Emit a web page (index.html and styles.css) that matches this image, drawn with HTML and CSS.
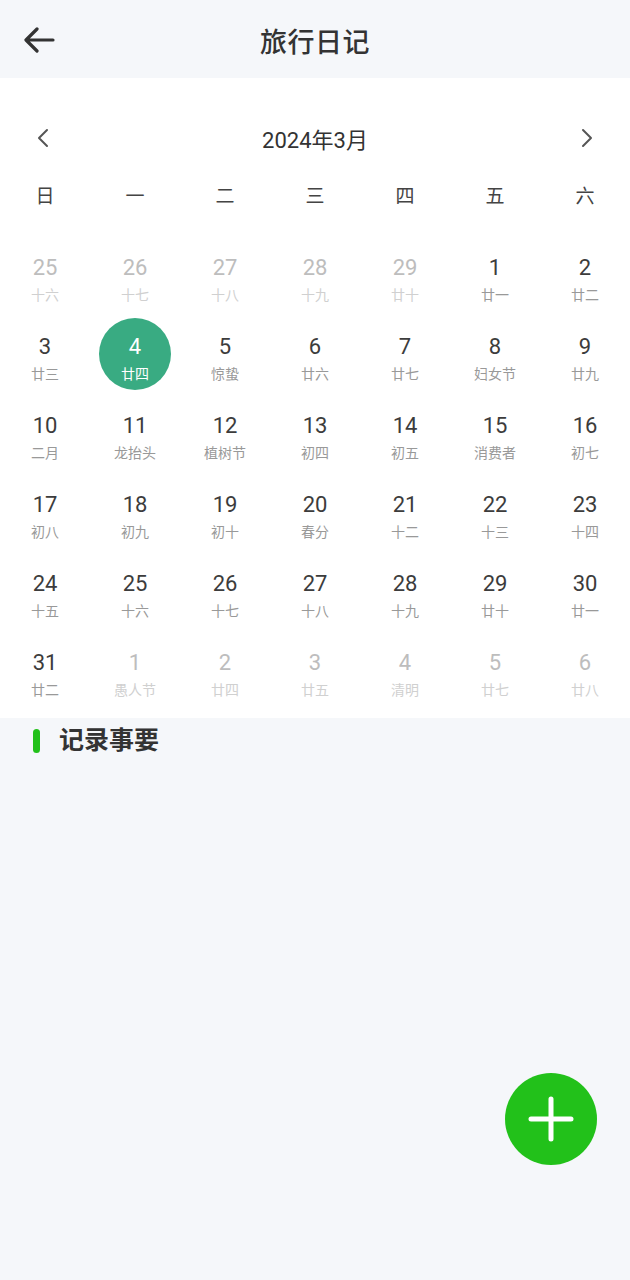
FILE: index.html
```html
<!DOCTYPE html>
<html lang="zh">
<head>
<meta charset="utf-8">
<link rel="stylesheet" href="styles.css">
</head>
<body>
<div class="page">
  <header class="topbar">
    <span class="back">
      <svg width="32" height="26" viewBox="0 0 32 26"><path d="M30 13H4M14 2L3 13l11 11" fill="none" stroke="#333" stroke-width="3.2" stroke-linecap="round" stroke-linejoin="round"/></svg>
    </span>
    <h1 class="title">旅行日记</h1>
  </header>

  <section class="calendar">
    <div class="month-bar">
      <span class="chev"><svg width="14" height="20" viewBox="0 0 14 20"><path d="M11 2L3 10l8 8" fill="none" stroke="#555" stroke-width="2" stroke-linecap="round" stroke-linejoin="round"/></svg></span>
      <span class="month">2024年3月</span>
      <span class="chev"><svg width="14" height="20" viewBox="0 0 14 20"><path d="M3 2l8 8-8 8" fill="none" stroke="#555" stroke-width="2" stroke-linecap="round" stroke-linejoin="round"/></svg></span>
    </div>
    <div class="weekdays">
      <span>日</span><span>一</span><span>二</span><span>三</span><span>四</span><span>五</span><span>六</span>
    </div>
    <div class="days">
      <div class="day other"><span class="num">25</span><span class="lunar">十六</span></div>
      <div class="day other"><span class="num">26</span><span class="lunar">十七</span></div>
      <div class="day other"><span class="num">27</span><span class="lunar">十八</span></div>
      <div class="day other"><span class="num">28</span><span class="lunar">十九</span></div>
      <div class="day other"><span class="num">29</span><span class="lunar">廿十</span></div>
      <div class="day"><span class="num">1</span><span class="lunar">廿一</span></div>
      <div class="day"><span class="num">2</span><span class="lunar">廿二</span></div>

      <div class="day"><span class="num">3</span><span class="lunar">廿三</span></div>
      <div class="day selected"><span class="num">4</span><span class="lunar">廿四</span></div>
      <div class="day"><span class="num">5</span><span class="lunar">惊蛰</span></div>
      <div class="day"><span class="num">6</span><span class="lunar">廿六</span></div>
      <div class="day"><span class="num">7</span><span class="lunar">廿七</span></div>
      <div class="day"><span class="num">8</span><span class="lunar">妇女节</span></div>
      <div class="day"><span class="num">9</span><span class="lunar">廿九</span></div>

      <div class="day"><span class="num">10</span><span class="lunar">二月</span></div>
      <div class="day"><span class="num">11</span><span class="lunar">龙抬头</span></div>
      <div class="day"><span class="num">12</span><span class="lunar">植树节</span></div>
      <div class="day"><span class="num">13</span><span class="lunar">初四</span></div>
      <div class="day"><span class="num">14</span><span class="lunar">初五</span></div>
      <div class="day"><span class="num">15</span><span class="lunar">消费者</span></div>
      <div class="day"><span class="num">16</span><span class="lunar">初七</span></div>

      <div class="day"><span class="num">17</span><span class="lunar">初八</span></div>
      <div class="day"><span class="num">18</span><span class="lunar">初九</span></div>
      <div class="day"><span class="num">19</span><span class="lunar">初十</span></div>
      <div class="day"><span class="num">20</span><span class="lunar">春分</span></div>
      <div class="day"><span class="num">21</span><span class="lunar">十二</span></div>
      <div class="day"><span class="num">22</span><span class="lunar">十三</span></div>
      <div class="day"><span class="num">23</span><span class="lunar">十四</span></div>

      <div class="day"><span class="num">24</span><span class="lunar">十五</span></div>
      <div class="day"><span class="num">25</span><span class="lunar">十六</span></div>
      <div class="day"><span class="num">26</span><span class="lunar">十七</span></div>
      <div class="day"><span class="num">27</span><span class="lunar">十八</span></div>
      <div class="day"><span class="num">28</span><span class="lunar">十九</span></div>
      <div class="day"><span class="num">29</span><span class="lunar">廿十</span></div>
      <div class="day"><span class="num">30</span><span class="lunar">廿一</span></div>

      <div class="day"><span class="num">31</span><span class="lunar">廿二</span></div>
      <div class="day other"><span class="num">1</span><span class="lunar">愚人节</span></div>
      <div class="day other"><span class="num">2</span><span class="lunar">廿四</span></div>
      <div class="day other"><span class="num">3</span><span class="lunar">廿五</span></div>
      <div class="day other"><span class="num">4</span><span class="lunar">清明</span></div>
      <div class="day other"><span class="num">5</span><span class="lunar">廿七</span></div>
      <div class="day other"><span class="num">6</span><span class="lunar">廿八</span></div>
    </div>
  </section>

  <section class="records">
    <h2 class="records-title"><span class="bar"></span>记录事要</h2>
  </section>

  <button class="fab" aria-label="添加">
    <svg width="46" height="46" viewBox="0 0 46 46"><path d="M23 3v40M3 23h40" stroke="#fff" stroke-width="5" stroke-linecap="round"/></svg>
  </button>
</div>
</body>
</html>
```

FILE: styles.css
```css
* { box-sizing: border-box; }
html, body {
  margin: 0;
  padding: 0;
  background: #f5f7fa;
  font-family: Roboto, "Noto Sans CJK SC", sans-serif;
  color: #333;
}
.page {
  position: relative;
  width: 630px;
  min-height: 1280px;
}
.topbar {
  height: 78px;
  display: flex;
  align-items: center;
  justify-content: center;
  position: relative;
  background: #f5f7fa;
}
.back {
  position: absolute;
  left: 23px;
  top: 27px;
  display: flex;
}
.title {
  margin: 0;
  font-size: 27px;
  font-weight: 500;
  color: #333;
  letter-spacing: 0.5px;
  padding-top: 2px;
}
.calendar {
  background: #fff;
  padding: 40px 0 8px;
}
.month-bar {
  height: 40px;
  display: flex;
  align-items: center;
  justify-content: space-between;
  padding: 0 36px 0 36px;
}
.chev { display: flex; }
.month {
  font-size: 22px;
  color: #333;
}
.weekdays {
  margin-top: 16px;
  height: 40px;
  display: grid;
  grid-template-columns: repeat(7, 90px);
  align-items: center;
  justify-items: center;
  font-size: 19px;
  color: #444;
}
.days {
  margin-top: 22px;
  display: grid;
  grid-template-columns: repeat(7, 90px);
  grid-auto-rows: 79px;
}
.day {
  position: relative;
  display: flex;
  flex-direction: column;
  align-items: center;
  padding-top: 19px;
}
.num {
  position: relative;
  font-size: 22px;
  line-height: 26px;
  color: #3c3c3c;
}
.lunar {
  position: relative;
  margin-top: 5px;
  font-size: 14px;
  line-height: 18px;
  color: #999;
}
.day.other .num { color: #bdbdbd; }
.day.other .lunar { color: #d0d0d0; }
.day.selected::before {
  content: "";
  position: absolute;
  left: 9px;
  top: 3px;
  width: 72px;
  height: 72px;
  border-radius: 50%;
  background: #39ab82;
}
.day.selected .num,
.day.selected .lunar { color: #fff; }
.records {
  padding: 8px 33px;
}
.records-title {
  margin: 0;
  display: flex;
  align-items: center;
  gap: 19px;
  font-size: 25px;
  font-weight: 700;
  color: #333;
  line-height: 30px;
}
.bar {
  width: 7px;
  height: 24px;
  border-radius: 4px;
  background: #22c11a;
}
.fab {
  position: absolute;
  left: 505px;
  top: 1073px;
  width: 92px;
  height: 92px;
  border: none;
  border-radius: 50%;
  background: #22c11a;
  display: flex;
  align-items: center;
  justify-content: center;
  padding: 0;
}
```
